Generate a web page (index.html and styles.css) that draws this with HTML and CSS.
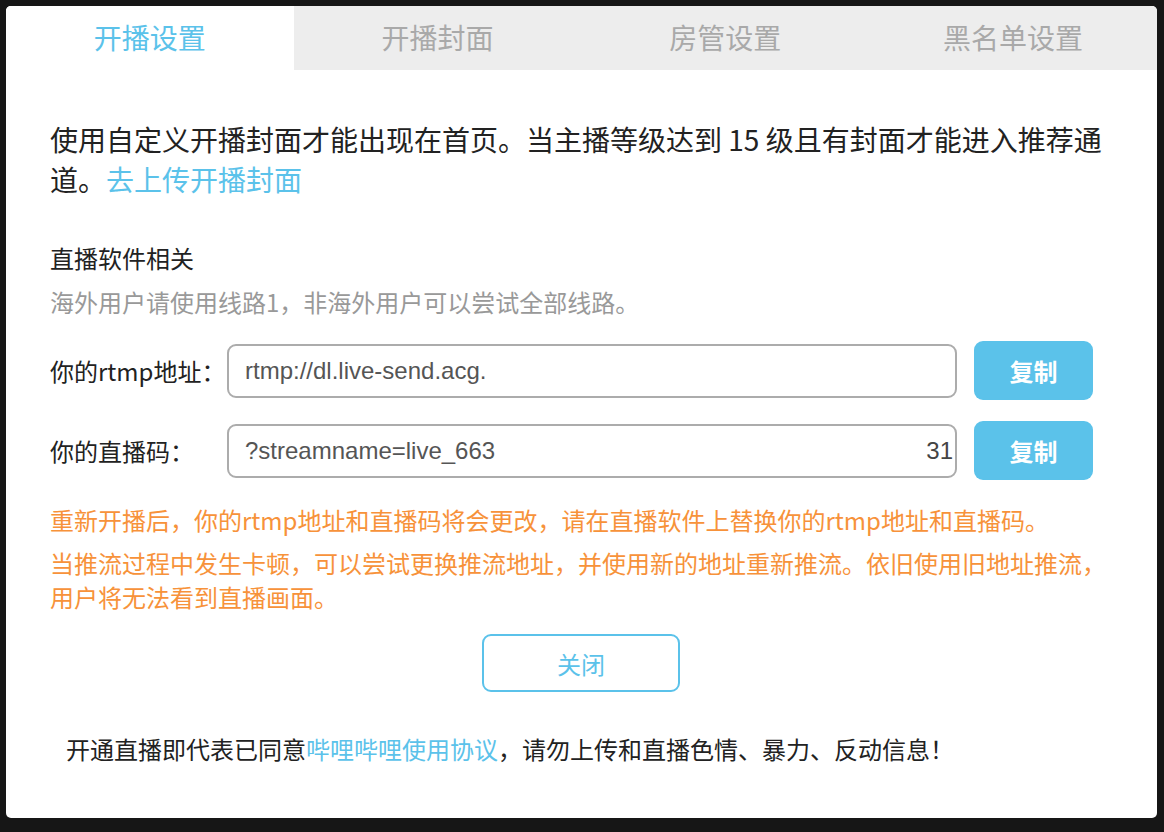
FILE: index.html
```html
<!DOCTYPE html>
<html>
<head>
    <meta charset="UTF-8">
    <title>开播设置</title>
    <link rel="stylesheet" href="styles.css">
</head>
<body>
    <div class="panel">
        <div class="tabs">
            <div class="tab active">开播设置</div>
            <div class="tab">开播封面</div>
            <div class="tab">房管设置</div>
            <div class="tab">黑名单设置</div>
        </div>

        <div class="content">
            <p class="intro">使用自定义开播封面才能出现在首页。当主播等级达到 15 级且有封面才能进入推荐通道。<a href="#" class="link">去上传开播封面</a></p>

            <h3 class="section-title">直播软件相关</h3>
            <p class="hint">海外用户请使用线路1，非海外用户可以尝试全部线路。</p>

            <div class="field-row">
                <label class="field-label">你的rtmp地址：</label>
                <div class="field-box">
                    <span>rtmp://dl.live-send.acg.</span>
                </div>
                <button class="copy-btn">复制</button>
            </div>

            <div class="field-row">
                <label class="field-label">你的直播码：</label>
                <div class="field-box">
                    <span>?streamname=live_663</span>
                    <span class="tail">31</span>
                </div>
                <button class="copy-btn">复制</button>
            </div>

            <p class="warn">重新开播后，你的rtmp地址和直播码将会更改，请在直播软件上替换你的rtmp地址和直播码。</p>
            <p class="warn">当推流过程中发生卡顿，可以尝试更换推流地址，并使用新的地址重新推流。依旧使用旧地址推流，用户将无法看到直播画面。</p>

            <div class="actions">
                <button class="close-btn">关闭</button>
            </div>

            <p class="agreement">开通直播即代表已同意<a href="#" class="link">哔哩哔哩使用协议</a>，请勿上传和直播色情、暴力、反动信息！</p>
        </div>
    </div>
</body>
</html>
```

FILE: styles.css
```css
html, body {
    margin: 0;
    height: 100%;
}

body {
    background: #161616;
    font-family: "Noto Sans CJK SC", "Liberation Sans", sans-serif;
    color: #222;
    padding: 6px 7px 0 6px;
    box-sizing: border-box;
}

.panel {
    background: white;
    border-radius: 5px;
    height: 812px;
    overflow: hidden;
}

.tabs {
    display: flex;
    height: 64px;
    background: #ededed;
}

.tab {
    flex: 1;
    display: flex;
    align-items: center;
    justify-content: center;
    font-size: 28px;
    color: #a9a9a9;
    padding-bottom: 2px;
}

.tab.active {
    background: white;
    color: #5bc2ea;
}

.content {
    padding: 49px 45px 0 44px;
}

.intro {
    margin: 0;
    font-size: 28px;
    line-height: 40px;
    width: 1062px;
}

.link {
    color: #5bc2ea;
    text-decoration: none;
}

.section-title {
    margin: 42px 0 0;
    font-size: 24px;
    font-weight: normal;
    line-height: 34px;
}

.hint {
    margin: 10px 0 0;
    font-size: 24px;
    line-height: 34px;
    color: #999;
}

.field-row {
    display: flex;
    align-items: center;
    margin-top: 22px;
}

.field-row + .field-row {
    margin-top: 21px;
}

.field-label {
    width: 177px;
    font-size: 24px;
}

.field-box {
    width: 730px;
    height: 54px;
    box-sizing: border-box;
    border: 2px solid #acacac;
    border-radius: 9px;
    display: flex;
    align-items: center;
    justify-content: space-between;
    padding: 0 2px 0 16px;
    font-family: "Liberation Sans", sans-serif;
    font-size: 24px;
    color: #555;
    overflow: hidden;
}

.tail {
    color: #444;
}

.copy-btn {
    margin-left: 17px;
    width: 119px;
    height: 59px;
    border: none;
    border-radius: 9px;
    background: #5bc2ea;
    color: white;
    font-family: inherit;
    font-size: 24px;
    font-weight: bold;
    cursor: pointer;
}

.warn {
    margin: 23px 0 0;
    font-size: 24px;
    line-height: 34px;
    color: #f7923a;
    width: 1062px;
}

.warn + .warn {
    margin-top: 9px;
}

.actions {
    display: flex;
    justify-content: center;
    margin-top: 20px;
}

.close-btn {
    width: 198px;
    height: 58px;
    background: white;
    border: 2px solid #5bc2ea;
    border-radius: 9px;
    color: #5bc2ea;
    font-family: inherit;
    font-size: 24px;
    cursor: pointer;
}

.agreement {
    margin: 40px 0 0 16px;
    font-size: 24px;
    line-height: 34px;
}
```
